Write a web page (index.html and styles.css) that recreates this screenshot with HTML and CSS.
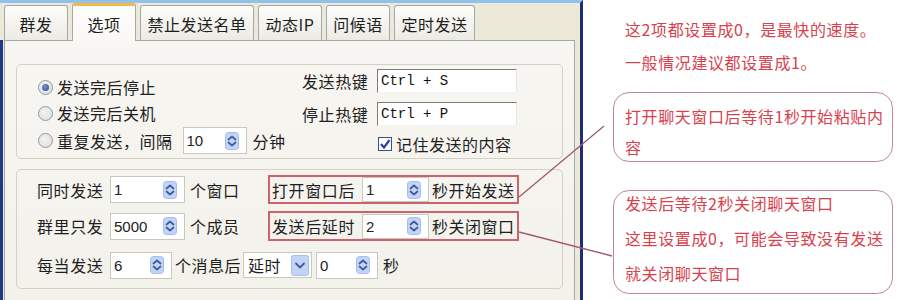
FILE: index.html
```html
<!DOCTYPE html>
<html lang="zh-CN">
<head>
<meta charset="utf-8">
<title>选项</title>
<link rel="stylesheet" href="styles.css">
</head>
<body>
<div class="page">
  <div class="window">
    <div class="tabs">
      <div class="tab w64">群发</div>
      <div class="tab w64 sel">选项</div>
      <div class="tab w114">禁止发送名单</div>
      <div class="tab w64">动态IP</div>
      <div class="tab w64">问候语</div>
      <div class="tab w81">定时发送</div>
    </div>
    <div class="body">
      <div class="panel">
        <div class="group g1">
          <div class="radios">
            <div class="rrow"><span class="radio on"></span><span class="txt">发送完后停止</span></div>
            <div class="rrow"><span class="radio"></span><span class="txt">发送完后关机</span></div>
            <div class="rrow tall"><span class="radio"></span><span class="txt">重复发送，间隔</span>
              <span class="spin sw64 ml10"><span class="num">10</span><svg class="sbtn" viewBox="0 0 14 18"><rect x="0.5" y="0.5" width="13" height="17" rx="3"/><path d="M3.5 7.5 L7 4.5 L10.5 7.5 M3.5 10.5 L7 13.5 L10.5 10.5"/></svg></span>
              <span class="txt ml6">分钟</span>
            </div>
          </div>
          <div class="keys">
            <div class="krow"><span class="klabel">发送热键</span><span class="kinput">Ctrl + S</span></div>
            <div class="krow mt9"><span class="klabel">停止热键</span><span class="kinput">Ctrl + P</span></div>
            <div class="crow"><svg class="check" viewBox="0 0 14 14"><rect x="0.5" y="0.5" width="13" height="13"/><path d="M3 7 L6 10.5 L11.5 3"/></svg><span class="txt">记住发送的内容</span></div>
          </div>
        </div>
        <div class="group g2">
          <div class="frow">
            <span class="flabel">同时发送</span>
            <span class="spin sw75"><span class="num">1</span><svg class="sbtn" viewBox="0 0 14 18"><rect x="0.5" y="0.5" width="13" height="17" rx="3"/><path d="M3.5 7.5 L7 4.5 L10.5 7.5 M3.5 10.5 L7 13.5 L10.5 10.5"/></svg></span>
            <span class="unit">个窗口</span>
            <div class="redbox">
              <span class="rlabel">打开窗口后</span>
              <span class="spin sw67 inbox"><span class="num">1</span><svg class="sbtn" viewBox="0 0 14 18"><rect x="0.5" y="0.5" width="13" height="17" rx="3"/><path d="M3.5 7.5 L7 4.5 L10.5 7.5 M3.5 10.5 L7 13.5 L10.5 10.5"/></svg></span>
              <span class="txt ml3">秒开始发送</span>
            </div>
          </div>
          <div class="frow r2">
            <span class="flabel">群里只发</span>
            <span class="spin sw75"><span class="num">5000</span><svg class="sbtn" viewBox="0 0 14 18"><rect x="0.5" y="0.5" width="13" height="17" rx="3"/><path d="M3.5 7.5 L7 4.5 L10.5 7.5 M3.5 10.5 L7 13.5 L10.5 10.5"/></svg></span>
            <span class="unit">个成员</span>
            <div class="redbox">
              <span class="rlabel">发送后延时</span>
              <span class="spin sw67 inbox"><span class="num">2</span><svg class="sbtn" viewBox="0 0 14 18"><rect x="0.5" y="0.5" width="13" height="17" rx="3"/><path d="M3.5 7.5 L7 4.5 L10.5 7.5 M3.5 10.5 L7 13.5 L10.5 10.5"/></svg></span>
              <span class="txt ml3">秒关闭窗口</span>
            </div>
          </div>
          <div class="frow r3">
            <span class="flabel">每当发送</span>
            <span class="spin sw62"><span class="num">6</span><svg class="sbtn" viewBox="0 0 14 18"><rect x="0.5" y="0.5" width="13" height="17" rx="3"/><path d="M3.5 7.5 L7 4.5 L10.5 7.5 M3.5 10.5 L7 13.5 L10.5 10.5"/></svg></span>
            <span class="txt ml3 w65">个消息后</span>
            <span class="select"><span class="txt">延时</span><svg class="dbtn" viewBox="0 0 18 21"><rect x="0.5" y="0.5" width="17" height="20" rx="2"/><path d="M5 8.5 L9 12.5 L13 8.5"/></svg></span>
            <span class="spin sw62 ml4"><span class="num">0</span><svg class="sbtn" viewBox="0 0 14 18"><rect x="0.5" y="0.5" width="13" height="17" rx="3"/><path d="M3.5 7.5 L7 4.5 L10.5 7.5 M3.5 10.5 L7 13.5 L10.5 10.5"/></svg></span>
            <span class="txt ml5">秒</span>
          </div>
        </div>
      </div>
    </div>
  </div>
  <div class="notes">
    <div class="nline">这2项都设置成0，是最快的速度。</div>
    <div class="nline mt9">一般情况建议都设置成1。</div>
    <div class="callout c1">
      <div class="cline">打开聊天窗口后等待1秒开始粘贴内</div>
      <div class="cline gap7">容</div>
    </div>
    <div class="callout c2">
      <div class="cline">发送后等待2秒关闭聊天窗口</div>
      <div class="cline gap11">这里设置成0，可能会导致没有发送</div>
      <div class="cline gap11">就关闭聊天窗口</div>
    </div>
  </div>
  <svg class="leaders" viewBox="0 0 903 300">
    <path d="M519 197 L604 126"/>
    <path d="M519 232 L612 256"/>
  </svg>
</div>
</body>
</html>
```

FILE: styles.css
```css
html, body {
  margin: 0;
  padding: 0;
  background: #ffffff;
}

.page {
  position: relative;
  display: flex;
  width: 903px;
  height: 300px;
  overflow: hidden;
  font-family: "Noto Sans CJK SC", "Noto Sans", sans-serif;
  font-size: 16px;
  letter-spacing: 0.5px;
  color: #1e1e1e;
}

/* ---------- window ---------- */
.window {
  width: 583px;
  height: 300px;
  box-sizing: border-box;
  flex: none;
  background: #ece9d8;
  border-top: 3px solid #8fc1ea;
  border-right: 3px solid #1d2f70;
  display: flex;
  flex-direction: column;
}

.tabs {
  height: 45px;
  box-sizing: border-box;
  padding: 0 0 0 4px;
  display: flex;
  align-items: flex-end;
  gap: 4px;
  position: relative;
  z-index: 2;
}

.tab {
  height: 35px;
  box-sizing: border-box;
  border: 1px solid #a3a9a9;
  border-bottom: none;
  border-radius: 3px 3px 0 0;
  background: linear-gradient(#fdfdfc, #eceae3);
  display: flex;
  align-items: center;
  justify-content: center;
  line-height: 1;
  padding-top: 2px;
}

.tab.sel {
  height: 38px;
  margin-bottom: -1px;
  background: linear-gradient(#fefefe, #f9f8f4);
  border-top: 3px solid #f2b84a;
  padding-top: 0;
}

.w64 { width: 64px; }
.w81 { width: 81px; }
.w114 { width: 114px; }

.body {
  flex: 1;
  border-left: 3px solid #22398a;
  padding-left: 1px;
}

.panel {
  width: 571px;
  height: 270px;
  box-sizing: border-box;
  border: 1px solid #a3a9a9;
  background: linear-gradient(#f7f6f2, #f2f1ea);
  padding: 23px 11px 0 11px;
}

.group {
  width: 547px;
  box-sizing: border-box;
  border: 1px solid #d3d1c2;
  border-radius: 5px;
  padding-left: 20px;
}

/* ---------- group 1 ---------- */
.g1 {
  height: 95px;
  display: flex;
  align-items: flex-start;
}

.radios {
  width: 265px;
  margin-top: 9px;
}

.rrow {
  height: 26px;
  display: flex;
  align-items: center;
}

.rrow.tall { height: 29px; }

.radio {
  width: 15px;
  height: 15px;
  box-sizing: border-box;
  border-radius: 50%;
  border: 1px solid #8e99ad;
  background: radial-gradient(circle at 40% 40%, #f4f4f0, #dcdcd6);
  margin-left: 1px;
  margin-right: 4px;
  display: flex;
  align-items: center;
  justify-content: center;
  flex: none;
}

.radio.on::after {
  content: "";
  width: 7px;
  height: 7px;
  border-radius: 50%;
  background: radial-gradient(circle at 40% 40%, #7b8fd0, #2f4594);
}

.txt {
  line-height: 1;
  white-space: nowrap;
}

.keys {
  margin-top: 4px;
  flex: 1;
}

.krow {
  height: 24px;
  display: flex;
  align-items: center;
}

.klabel {
  width: 66px;
  margin-right: 9px;
  line-height: 1;
  white-space: nowrap;
  letter-spacing: 0.6px;
}

.kinput {
  width: 140px;
  height: 24px;
  box-sizing: border-box;
  background: #ffffff;
  border: 1px solid;
  border-color: #7b7b7b #e8e8e4 #f2f2ee #7b7b7b;
  font-family: "Liberation Mono", monospace;
  font-size: 14px;
  letter-spacing: 0;
  line-height: 22px;
  padding-left: 3px;
  color: #111;
}

.crow {
  height: 20px;
  margin-top: 8px;
  display: flex;
  align-items: center;
  padding-left: 76px;
}

.check {
  width: 14px;
  height: 14px;
  margin-right: 4px;
  flex: none;
}

.check rect {
  fill: #ffffff;
  stroke: #33508a;
}

.check path {
  fill: none;
  stroke: #2a3db0;
  stroke-width: 2.2;
}

/* ---------- spinners ---------- */
.spin {
  height: 27px;
  box-sizing: border-box;
  background: #ffffff;
  border: 1px solid #c9c8bd;
  display: flex;
  align-items: center;
  justify-content: space-between;
  padding: 0 7px 0 3px;
  flex: none;
}

.spin.inbox { height: 25px; }

.sw62 { width: 62px; }
.sw64 { width: 64px; }
.sw67 { width: 67px; }
.sw75 { width: 75px; }

.num {
  font-family: "Liberation Sans", sans-serif;
  font-size: 15px;
  letter-spacing: 0;
  line-height: 1;
  color: #222;
}

.sbtn {
  width: 14px;
  height: 18px;
  flex: none;
}

.sbtn rect {
  fill: #c3d4f7;
  stroke: #a4bbeb;
}

.sbtn path,
.dbtn path {
  fill: none;
  stroke: #3f5c9c;
  stroke-width: 1.8;
  stroke-linecap: round;
  stroke-linejoin: round;
}

.select {
  width: 69px;
  height: 26px;
  box-sizing: border-box;
  background: #ffffff;
  border: 1px solid #c9c8bd;
  margin-left: 3px;
  display: flex;
  align-items: center;
  justify-content: space-between;
  padding: 0 2px 0 4px;
  flex: none;
}

.dbtn {
  width: 18px;
  height: 21px;
  flex: none;
}

.dbtn rect {
  fill: #c3d4f7;
  stroke: #a9bfee;
}

/* ---------- group 2 ---------- */
.g2 {
  margin-top: 10px;
  height: 120px;
  padding-top: 5px;
  display: flex;
  flex-direction: column;
}

.frow {
  height: 29px;
  display: flex;
  align-items: center;
}

.frow.r2 {
  height: 30px;
  margin-top: 7px;
}

.frow.r3 {
  height: 30px;
  margin-top: 9px;
}

.flabel {
  width: 66px;
  margin-right: 7px;
  line-height: 1;
  white-space: nowrap;
  letter-spacing: 0.6px;
}

.unit {
  width: 83px;
  box-sizing: border-box;
  padding-left: 5px;
  line-height: 1;
  white-space: nowrap;
}

.redbox {
  width: 251px;
  height: 100%;
  box-sizing: border-box;
  border: 2px solid #c8646a;
  display: flex;
  align-items: center;
  padding-left: 2px;
}

.rlabel {
  width: 90px;
  line-height: 1;
  white-space: nowrap;
  letter-spacing: 0.6px;
}

.w65 { width: 65px; }
.ml3 { margin-left: 3px; }
.ml4 { margin-left: 4px; }
.ml5 { margin-left: 5px; }
.ml6 { margin-left: 6px; }
.ml10 { margin-left: 10px; }
.mt9 { margin-top: 9px; }

/* ---------- notes ---------- */
.notes {
  flex: 1;
  padding: 17px 0 0 30px;
  color: #d8414e;
  letter-spacing: 0.6px;
}

.nline {
  padding-left: 12px;
  line-height: 24px;
  height: 24px;
  white-space: nowrap;
}

.callout {
  width: 280px;
  box-sizing: border-box;
  border: 1.5px solid #c48990;
  border-radius: 16px;
  padding-left: 11px;
}

.c1 {
  margin-top: 18px;
  padding-top: 11px;
  padding-bottom: 2px;
}

.c2 {
  margin-top: 28px;
  padding-top: 0;
  padding-bottom: 8px;
}

.cline {
  line-height: 24px;
  height: 24px;
  white-space: nowrap;
}

.gap7 { margin-top: 7px; }
.gap11 { margin-top: 11px; }

.leaders {
  position: absolute;
  left: 0;
  top: 0;
  width: 903px;
  height: 300px;
  pointer-events: none;
}

.leaders path {
  fill: none;
  stroke: #a15a70;
  stroke-width: 1.3;
}
```
